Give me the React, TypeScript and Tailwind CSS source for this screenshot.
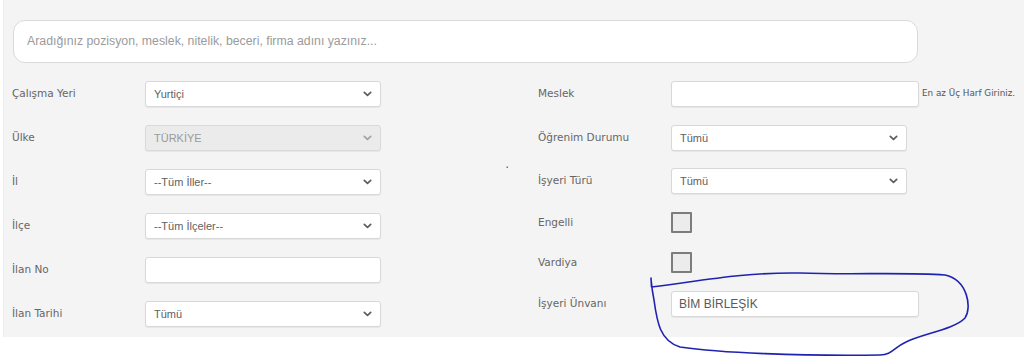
import React from "react";

const Chevron = () => (
  <svg width="9" height="6" viewBox="0 0 9 6" className="shrink-0">
    <path d="M1.3 1.3 L4.5 4.4 L7.7 1.3" fill="none" stroke="#5c5c5c" strokeWidth="1.7" strokeLinecap="round" strokeLinejoin="round" />
  </svg>
);

const Select = ({ value, disabled = false }: { value: string; disabled?: boolean }) => (
  <div
    className={`w-[236px] h-[26px] rounded-[3px] border flex items-center justify-between pl-[8px] pr-[8px] shadow-[0_1px_1px_rgba(0,0,0,0.06)] text-[11px] ${
      disabled ? "bg-[#ebebeb] border-[#dadada] text-[#9a9a9a]" : "bg-white border-[#d8d8d8] text-[#5f5f5f]"
    }`}
    style={{ fontFamily: '"Liberation Sans", Arial, sans-serif' }}
  >
    <span>{value}</span>
    <span className={disabled ? "opacity-50" : ""}>
      <Chevron />
    </span>
  </div>
);

const TextInput = ({ value = "", w = "w-[236px]" }: { value?: string; w?: string }) => (
  <div
    className={`${w} h-[26px] rounded-[3px] border border-[#d8d8d8] bg-white flex items-center pl-[7px] text-[12px] text-[#5a5a5a] shadow-[0_1px_1px_rgba(0,0,0,0.06)]`}
    style={{ fontFamily: '"Liberation Sans", Arial, sans-serif' }}
  >
    {value}
  </div>
);

const Label = ({ children }: { children: React.ReactNode }) => (
  <div className="w-[133px] shrink-0 text-[10.5px] text-[#666]">{children}</div>
);

const Checkbox = () => (
  <div className="w-[21px] h-[21px] border-2 border-[#7c7c7c] bg-[#ececec] rounded-[1px]" />
);

export default function App() {
  return (
    <div
      className="relative w-[1024px] h-[357px] bg-white overflow-hidden"
      style={{ fontFamily: '"DejaVu Sans", Verdana, sans-serif' }}
    >
      <div className="ml-[3px] h-[337px] bg-[#f4f4f4] border-l border-[#ececec] pt-[20px] pl-[8px]">
        <div
          className="ml-[1px] w-[905px] h-[43px] bg-white border border-[#dadada] rounded-[12px] flex items-center pl-[13px] text-[12.3px] text-[#9b9b9b]"
          style={{ fontFamily: '"Liberation Sans", Arial, sans-serif' }}
        >
          Aradığınız pozisyon, meslek, nitelik, beceri, firma adını yazınız...
        </div>

        <div className="flex mt-[18px]">
          {/* Left column */}
          <div className="w-[526px] flex flex-col gap-[18px]">
            <div className="flex items-center h-[26px]">
              <Label>Çalışma Yeri</Label>
              <Select value="Yurtiçi" />
            </div>
            <div className="flex items-center h-[26px]">
              <Label>Ülke</Label>
              <Select value="TÜRKİYE" disabled />
            </div>
            <div className="flex items-center h-[26px]">
              <Label>İl</Label>
              <Select value="--Tüm İller--" />
            </div>
            <div className="flex items-center h-[26px]">
              <Label>İlçe</Label>
              <Select value="--Tüm İlçeler--" />
            </div>
            <div className="flex items-center h-[26px]">
              <Label>İlan No</Label>
              <TextInput />
            </div>
            <div className="flex items-center h-[26px]">
              <Label>İlan Tarihi</Label>
              <Select value="Tümü" />
            </div>
          </div>

          {/* Right column */}
          <div className="flex flex-col">
            <div className="flex items-center h-[26px]">
              <Label>Meslek</Label>
              <TextInput w="w-[248px]" />
              <span className="ml-[3px] text-[8.8px] text-[#555]">En az Üç Harf Giriniz.</span>
            </div>
            <div className="flex items-center h-[26px] mt-[18px]">
              <Label>Öğrenim Durumu</Label>
              <Select value="Tümü" />
            </div>
            <div className="flex items-center h-[26px] mt-[17px]">
              <Label>İşyeri Türü</Label>
              <Select value="Tümü" />
            </div>
            <div className="flex items-center h-[21px] mt-[18px]">
              <Label>Engelli</Label>
              <Checkbox />
            </div>
            <div className="flex items-center h-[21px] mt-[19px]">
              <Label>Vardiya</Label>
              <Checkbox />
            </div>
            <div className="flex items-center h-[26px] mt-[18px]">
              <Label>İşyeri Ünvanı</Label>
              <TextInput value="BİM BİRLEŞİK" w="w-[248px]" />
            </div>
          </div>
        </div>
      </div>

      {/* Hand-drawn annotation */}
      <svg className="absolute left-0 top-0 pointer-events-none" width="1024" height="357" viewBox="0 0 1024 357">
        <path
          d="M651,278 L651.5,287 C 700,281 745,272 800,273 C 850,275 905,272 945,275 C 968,280 972,308 965,318 C 955,329 922,334 906,342 C 893,348 892,355 880,355 C 800,356 720,353 680,347 C 660,341 657,322 654,300 C 652,290 651.5,284 651,279"
          fill="none"
          stroke="#1f22b0"
          strokeWidth="1.6"
          strokeLinecap="round"
          strokeLinejoin="round"
        />
        <rect x="506.5" y="166.5" width="1.5" height="1.5" fill="#5a6cc4" />
      </svg>
    </div>
  );
}
